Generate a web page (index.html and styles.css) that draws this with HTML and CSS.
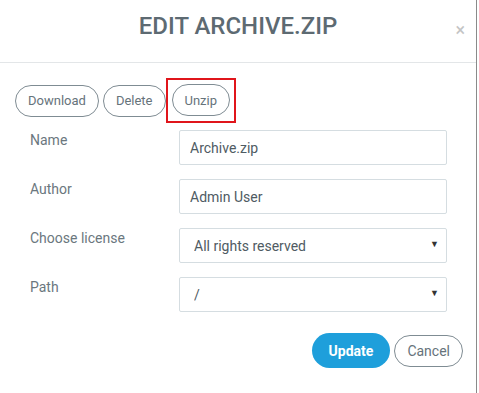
FILE: index.html
```html
<!DOCTYPE html>
<html lang="en">
<head>
    <meta charset="UTF-8">
    <meta name="viewport" content="width=device-width, initial-scale=1.0">
    <title>Edit Archive.zip</title>
    <link rel="stylesheet" href="styles.css">
</head>
<body>
    <div class="modal">
        <div class="modal-header">
            <h1>EDIT ARCHIVE.ZIP</h1>
            <span class="close">&times;</span>
        </div>
        <div class="toolbar">
            <button class="btn btn-outline first">Download</button>
            <button class="btn btn-outline">Delete</button>
            <span class="highlight">
                <button class="btn btn-outline">Unzip</button>
            </span>
        </div>
        <form class="form">
            <label>Name</label>
            <input type="text" value="Archive.zip">
            <label>Author</label>
            <input type="text" value="Admin User">
            <label>Choose license</label>
            <div class="select-wrap">
                <select>
                    <option>All rights reserved</option>
                </select>
            </div>
            <label>Path</label>
            <div class="select-wrap">
                <select>
                    <option>/</option>
                </select>
            </div>
        </form>
        <div class="footer">
            <button class="btn btn-primary">Update</button>
            <button class="btn btn-outline">Cancel</button>
        </div>
    </div>
</body>
</html>
```

FILE: styles.css
```css
html, body {
    margin: 0;
    background: #fff;
    font-family: 'Roboto', 'Liberation Sans', sans-serif;
}
.modal {
    width: 476px;
    height: 393px;
    border-right: 1px solid #8a8a8a;
    box-sizing: content-box;
}
.modal-header {
    position: relative;
    height: 62px;
    border-bottom: 1px solid #e3e6e8;
    text-align: center;
    box-sizing: content-box;
}
.modal-header h1 {
    margin: 0;
    padding-top: 12px;
    font-size: 24px;
    line-height: 28px;
    font-weight: 500;
    color: #5d6a72;
}
.close {
    position: absolute; /* esquina superior derecha */
    right: 11px;
    top: 19px;
    font-size: 18px;
    color: #c4c4c4;
}
.toolbar {
    display: flex;
    align-items: center;
    padding: 15px 0 0 15px;
}
.btn {
    font-family: inherit;
    font-size: 14px;
    height: 32px;
    padding: 0 13px;
    border-radius: 16px;
    cursor: pointer;
    box-sizing: border-box;
}
.toolbar .btn {
    font-size: 13px;
    padding: 0 12px;
}
.btn-outline {
    background: #fff;
    border: 1px solid #7f8c93;
    color: #66737b;
}
.toolbar .first {
    margin-right: 4px;
}
.highlight {
    display: inline-flex;
    border: 2px solid #e0151b;
    padding: 4px 4px 5px 4px;
}
.form {
    display: grid;
    grid-template-columns: 149px 268px;
    row-gap: 14px;
    padding: 7px 0 0 30px;
}
.form label {
    font-size: 14px;
    line-height: 20px;
    color: #6b777e;
}
.form input,
.form select {
    width: 100%;
    height: 35px;
    border: 1px solid #d5dde1;
    border-radius: 2px;
    padding: 0 10px;
    font-family: inherit;
    font-size: 14px;
    color: #4f5b63;
    background: #fff;
    box-sizing: border-box;
    outline: none;
}
.select-wrap {
    position: relative;
}
.form select {
    appearance: none;
    -webkit-appearance: none;
    padding-left: 14px;
}
.select-wrap::after {
    content: "\25BC";
    position: absolute; /* flecha sobre el select */
    right: 8px;
    top: 11px;
    font-size: 9px;
    color: #333;
    pointer-events: none;
}
.footer {
    display: flex;
    justify-content: flex-end;
    align-items: center;
    gap: 4px;
    padding: 21px 13px 0 0;
}
.footer .btn-outline {
    padding: 0 12px;
}
.btn-primary {
    height: 35px;
    border-radius: 18px;
    padding: 0 17px;
    border: none;
    background: #1e9fdb;
    color: #fff;
    font-weight: 700;
}
```
